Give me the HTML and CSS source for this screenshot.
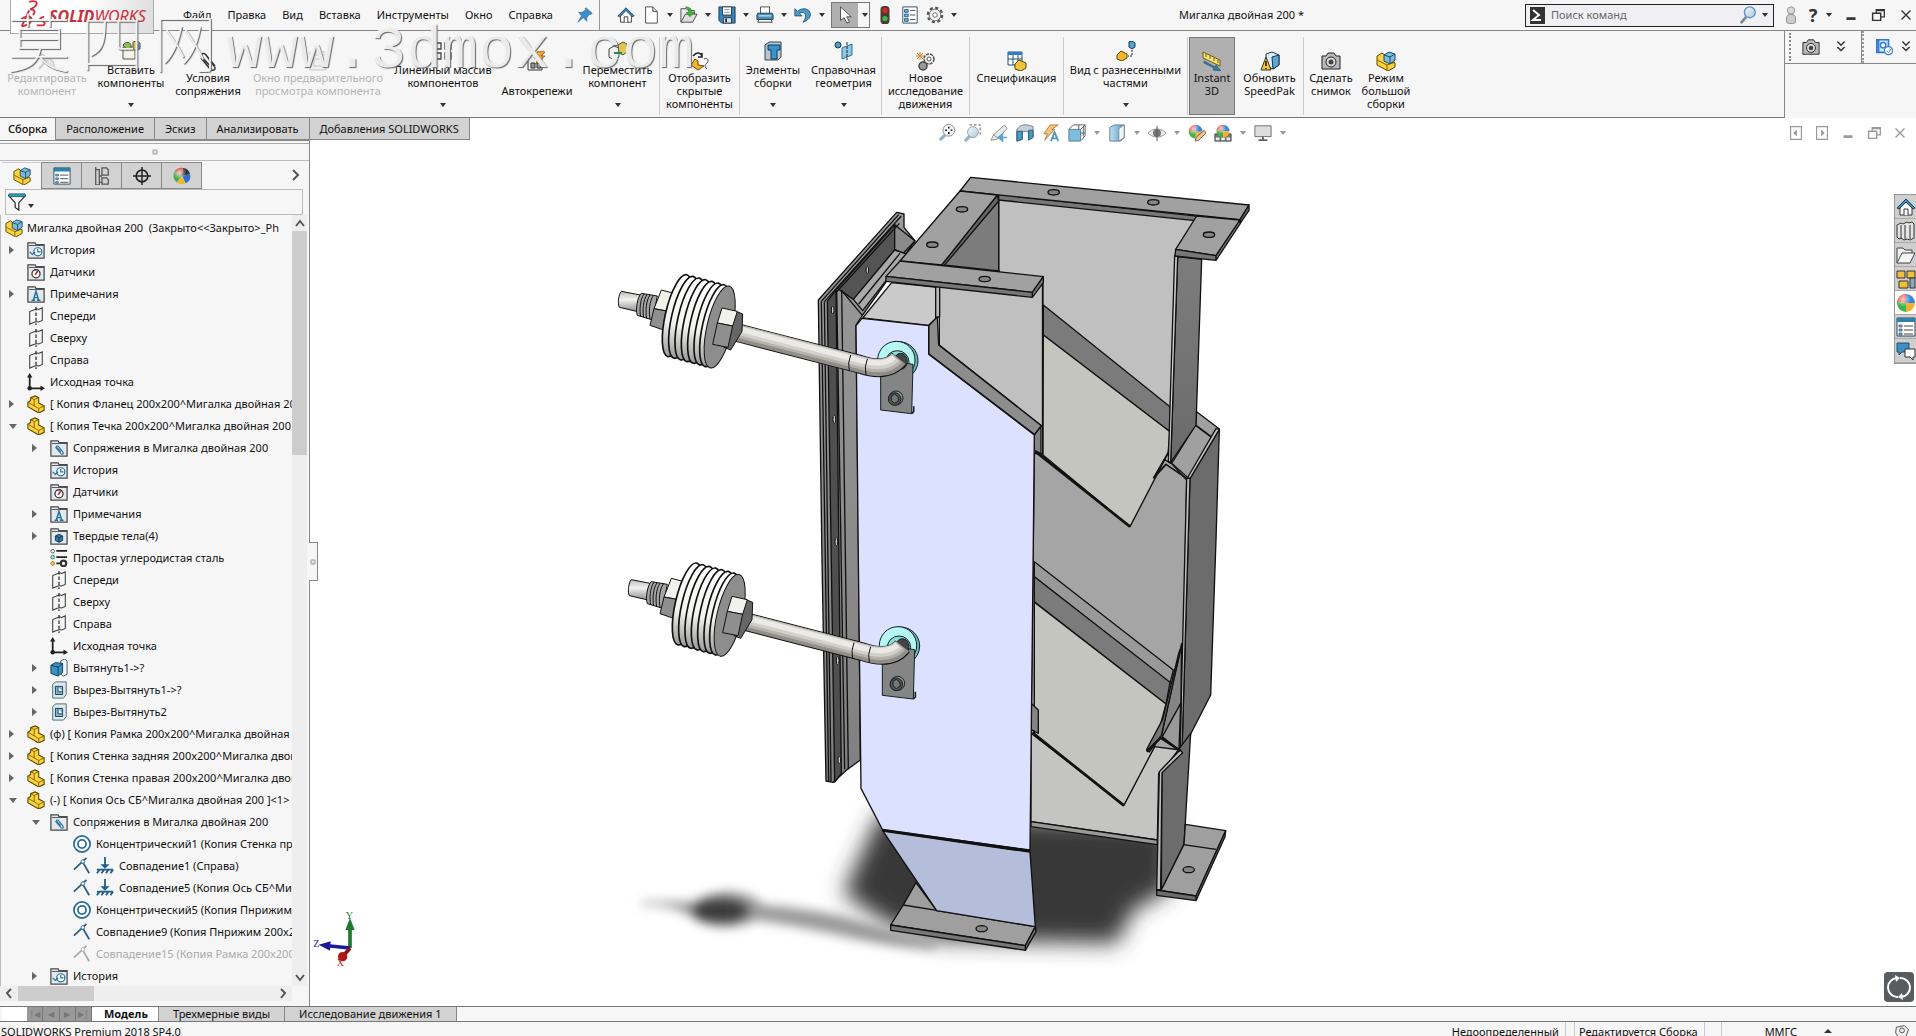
FILE: index.html
```html
<!DOCTYPE html>
<html lang="ru">
<head>
    <meta charset="UTF-8">
    <meta name="viewport" content="width=device-width, initial-scale=1.0">
    <title>Мигалка двойная 200 - SOLIDWORKS</title>
    <link rel="stylesheet" href="styles.css">
</head>
<body>
    <!-- icons -->
    <svg class="sprite" aria-hidden="true">
        <defs>
            <linearGradient id="lens" x1="0" y1="0" x2="1" y2="1"><stop offset="0" stop-color="#f4fbfe"/><stop offset="1" stop-color="#a9c9da"/></linearGradient>
            <linearGradient id="blue" x1="0" y1="0" x2="1" y2="0"><stop offset="0" stop-color="#bfe0f2"/><stop offset="1" stop-color="#4f9dc6"/></linearGradient>
            <radialGradient id="shine" cx=".35" cy=".3" r=".7"><stop offset="0" stop-color="#fff" stop-opacity=".75"/><stop offset=".6" stop-color="#fff" stop-opacity="0"/></radialGradient>
        </defs>
        <symbol id="home" viewBox="0 0 20 20"><path d="M4 10v8h12v-8l-6-6z" fill="#fff" stroke="#333"/><path d="M8 18v-6h4v6" fill="#fff" stroke="#333"/><path d="M1 11l9-9 9 9-2 1-7-7-7 7z" fill="#3f8fc0" stroke="#1d3f5c"/></symbol>
        <symbol id="doc" viewBox="0 0 20 20"><path d="M4 1h8l5 5v13H4z" fill="#fff" stroke="#444"/><path d="M12 1v5h5" fill="#ddd" stroke="#444"/></symbol>
        <symbol id="open" viewBox="0 0 20 20"><path d="M1 18V3h6l2 2h7v4" fill="#e8e8e8" stroke="#444"/><path d="M1 18L6 9h13l-5 9z" fill="#ddd" stroke="#444"/><path d="M6 1c5 0 7 2 7 6h3l-5 5-4-5h3c0-2-1-4-4-6z" fill="#3db53d" stroke="#1a6a1a" stroke-width=".6"/></symbol>
        <symbol id="save" viewBox="0 0 20 20"><path d="M1 1h18v18H4l-3-3z" fill="#3c83b5" stroke="#1f3a55"/><path d="M5 1h10v9H5z" fill="#fff" stroke="#1f3a55"/><path d="M7 4h6M7 7h6" stroke="#888"/><path d="M6 13h9v6H6z" fill="#ddd" stroke="#1f3a55"/><path d="M8 14h2v4H8z" fill="#224"/></symbol>
        <symbol id="print" viewBox="0 0 20 20"><path d="M5 1h10v8H5z" fill="#fff" stroke="#444"/><path d="M2 8h16l1 2v5H1v-5z" fill="#3f8fb8" stroke="#24404f"/><path d="M3 15h14l1 3H2z" fill="#fff" stroke="#333"/><path d="M3 11h14" stroke="#fff"/></symbol>
        <symbol id="undo" viewBox="0 0 20 20"><path d="M1 3v8h8L6 8c4-2 7 0 7 3s-2 5-3 7c6-2 9-6 8-10-1-5-9-7-14-2z" fill="#4f9aca" stroke="#1f5277"/></symbol>
        <symbol id="cursor" viewBox="0 0 20 20"><path d="M5 1v15l4-3 3 6 3-1-3-6h5z" fill="#fff" stroke="#444"/></symbol>
        <symbol id="light" viewBox="0 0 20 20"><rect x="5" y="0" width="10" height="20" rx="4" fill="#4a3a34"/><circle cx="10" cy="5" r="3" fill="#d8281c"/><circle cx="10" cy="14" r="3" fill="#38b848"/></symbol>
        <symbol id="list" viewBox="0 0 20 20"><path d="M2 1h16v18H2z" fill="#fff" stroke="#2b4356"/><path d="M4 4h4v3H4zM4 9h4v3H4zM4 14h4v3H4z" fill="#7fb6d8" stroke="#1f5277"/><path d="M10 5h6M10 10h6M10 15h6" stroke="#444"/></symbol>
        <symbol id="gear" viewBox="0 0 20 20"><circle cx="10" cy="10" r="8" fill="none" stroke="#555" stroke-width="2.5" stroke-dasharray="3.500 2.780"/><circle cx="10" cy="10" r="6.500" fill="#eee" stroke="#666"/><circle cx="10" cy="10" r="2.500" fill="#fff" stroke="#666"/></symbol>
        <symbol id="pin" viewBox="0 0 20 20"><path d="M11 2l7 6-2 2-1-1-3 4v4l-4-4-6 5 4-7-3-4h4l4-3-1-1z" fill="#3c8fcb" stroke="#2a6c9e" stroke-width=".7"/></symbol>
        <symbol id="mag" viewBox="0 0 20 20"><path d="M8 12l-6 7" stroke="#7a8a94" stroke-width="3"/><circle cx="12" cy="7" r="6" fill="url(#lens)" stroke="#5b8fc0" stroke-width="1.5"/></symbol>
        <symbol id="person" viewBox="0 0 20 20"><circle cx="10" cy="5" r="4" fill="#d8d8d8" stroke="#888"/><path d="M5 13c0-5 10-5 10 0v5c0 2-10 2-10 0z" fill="#ccc" stroke="#888"/></symbol>
        <symbol id="restore" viewBox="0 0 20 20"><path d="M8 8V4h9v8h-4" fill="none" stroke="currentColor" stroke-width="1.4"/><path d="M4 8h9v8H4zM8 5h9" fill="none" stroke="currentColor" stroke-width="1.6"/></symbol>
        <symbol id="min" viewBox="0 0 20 20"><path d="M5 14h10" stroke="currentColor" stroke-width="3"/></symbol>
        <symbol id="close" viewBox="0 0 20 20"><path d="M5 5l10 10M15 5L5 15" stroke="currentColor" stroke-width="1.5"/></symbol>
        <symbol id="camera" viewBox="0 0 20 20"><path d="M1 5h4l2-3h6l2 3h4v13H1z" fill="#b9b9b9" stroke="#222"/><circle cx="10" cy="11" r="5" fill="#ddd" stroke="#222"/><circle cx="10" cy="11" r="2.5" fill="#444"/></symbol>
        <symbol id="chev2" viewBox="0 0 20 20"><path d="M6 4l4 4 4-4M6 10l4 4 4-4" fill="none" stroke="#333" stroke-width="1.6"/></symbol>
        <symbol id="bluebox" viewBox="0 0 20 20"><path d="M2 2h13v14H2zM4 2v14" fill="#cfe4f9" stroke="#2f7ad0" stroke-width="1.8"/><circle cx="9" cy="8" r="3" fill="#fff" stroke="#2f7ad0" stroke-width="1.5"/><circle cx="15" cy="14" r="4.5" fill="#fff" stroke="#2f7ad0" stroke-width="1.3"/><path d="M13 14l2 2 3-4" fill="none" stroke="#2f7ad0"/></symbol>

        <symbol id="part" viewBox="0 0 20 20"><path d="M1 8l3-2V3l5-2 4 2v6l6 3v5l-6 3L1 13z" fill="#fcd33a" stroke="#5a4600" stroke-width="1.200"/><path d="M1 8l12 7v5M4 3l4 2 5-2M8 5v7M13 15l6-3" fill="none" stroke="#7c6200"/></symbol>
        <symbol id="asm" viewBox="0 0 20 20"><path d="M1 5l5-3 4 3v5l9 2v4l-7 4L1 14z" fill="#fcd33a" stroke="#5a4600"/><path d="M1 9l10 5v5M11 14l8-3" fill="none" stroke="#7c6200"/><path d="M8 4l5-3 6 2v6l-5 4-6-3z" fill="#7dbce0" stroke="#1d4a68"/><path d="M8 4l6 2 5-3M14 6v7" fill="none" stroke="#1d4a68"/></symbol>
        <symbol id="folder" viewBox="0 0 20 20"><path d="M1 19V2h8l1 2h9v15z" fill="#e2e8ec" stroke="#4a4a4a" stroke-width="1.400"/><path d="M2 5h17" stroke="#4a4a4a"/></symbol>
        <symbol id="hist" viewBox="0 0 20 20"><use href="#folder"/><circle cx="12" cy="12" r="4.500" fill="#fff" stroke="#1f6f9e" stroke-width="1.300"/><path d="M12 9v3h3M3 12l3 3 3-3" fill="none" stroke="#1f6f9e" stroke-width="1.300"/></symbol>
        <symbol id="sensor" viewBox="0 0 20 20"><use href="#folder"/><circle cx="10" cy="12" r="4.500" fill="#fff" stroke="#333" stroke-width="1.400"/><path d="M9 13l3-4" stroke="#c22" stroke-width="1.800"/></symbol>
        <symbol id="note" viewBox="0 0 20 20"><use href="#folder"/><path d="M5 17h4M11 17h4M7 17l3-10 3 10M8 14h4" fill="none" stroke="#216f9f" stroke-width="1.600"/></symbol>
        <symbol id="mates" viewBox="0 0 20 20"><use href="#folder"/><path d="M6 9l6 7c2 2 4 0 2-2L9 8c-1-1-3 0-1 2l4 4" fill="none" stroke="#2a77a5" stroke-width="1.300"/></symbol>
        <symbol id="solids" viewBox="0 0 20 20"><use href="#folder"/><path d="M6 10l4-2 4 2v5l-4 2-4-2z" fill="#2f7fa8" stroke="#12384d"/><path d="M6 10l4 2 4-2M10 12v5" fill="none" stroke="#12384d"/></symbol>
        <symbol id="plane" viewBox="0 0 20 20"><path d="M8 3L3 5v14l5-2M12 3l5-2v14l-5 2M8 3l4-1M8 17l4-1" fill="none" stroke="#444" stroke-width="1.200"/><path d="M10 0v20" stroke="#222" stroke-width="1.300" stroke-dasharray="4 2"/></symbol>
        <symbol id="origin" viewBox="0 0 20 20"><path d="M3 3v14h14" fill="none" stroke="#222" stroke-width="2"/><path d="M3 0L0 5h6zM20 17l-5-3v6z" fill="#222"/><circle cx="3" cy="17" r="2.500" fill="#222"/></symbol>
        <symbol id="mat" viewBox="0 0 20 20"><path d="M7 2h12M7 9h12M7 16h4" stroke="#222" stroke-width="2"/><circle cx="3" cy="2.500" r="2" fill="#fff" stroke="#555"/><circle cx="3" cy="9" r="2" fill="#9fc" stroke="#275"/><circle cx="3" cy="16" r="2" fill="#fc5" stroke="#a70"/><circle cx="15" cy="16" r="3" fill="#fff" stroke="#333" stroke-width="2.400"/></symbol>
        <symbol id="boss" viewBox="0 0 20 20"><path d="M12 2l4-2 3 2v15l-4 2-3-2z" fill="#eef5f9" stroke="#355"/><path d="M1 7l5-3 8 1v10l-5 4-8-3z" fill="#3a93bf" stroke="#12384d"/><path d="M1 7l8 2 5-4M9 9v9" fill="none" stroke="#12384d"/></symbol>
        <symbol id="cut" viewBox="0 0 20 20"><path d="M3 4l3-3h12v14l-3 4H3z" fill="#dfe8ee" stroke="#466"/><path d="M6 6h8v9H6z" fill="#7db8d6" stroke="#12384d"/><path d="M9 6v6h5" fill="#fff" stroke="#12384d"/></symbol>
        <symbol id="conc" viewBox="0 0 20 20"><circle cx="10" cy="10" r="9" fill="#fff" stroke="#2a6f9c" stroke-width="2"/><circle cx="10" cy="10" r="4.500" fill="#fff" stroke="#2a6f9c" stroke-width="2"/></symbol>
        <symbol id="coin" viewBox="0 0 20 20"><path d="M1 14L15 1M11 6l7 12" fill="none" stroke="currentColor" stroke-width="2"/><circle cx="11" cy="5" r="2" fill="#fff" stroke="currentColor"/></symbol>
        <symbol id="ground" viewBox="0 0 20 20"><path d="M10 0v9M1 14h18M4 14l-3 4M9 14l-3 4M14 14l-3 4M19 14l-3 4" stroke="#1f5f88" stroke-width="2"/><path d="M5 8h10l-5 5z" fill="#1f5f88"/></symbol>
        <symbol id="tree-tab" viewBox="0 0 20 20"><path d="M3 0v20h4V3H3M7 10h3M7 17h3M10 1h5l2 2v6h-7zM10 12h5l2 2v5h-7z" fill="none" stroke="#555" stroke-width="1.400"/></symbol>
        <symbol id="prop" viewBox="0 0 20 20"><path d="M1 1h18v18H1z" fill="#fff" stroke="#2b4356"/><path d="M1 1h18v4H1z" fill="#2f7fad"/><path d="M3 8h3v2H3zM3 12h3v2H3zM3 16h3v2H3z" fill="#7fb6d8" stroke="#1f5277" stroke-width=".7"/><path d="M8 9h9M8 13h9M8 17h9" stroke="#444"/></symbol>
        <symbol id="target" viewBox="0 0 20 20"><circle cx="10" cy="10" r="6.500" fill="none" stroke="#222" stroke-width="1.800"/><path d="M10 0v20M0 10h20" stroke="#222" stroke-width="1.600"/></symbol>
        <symbol id="ball" viewBox="0 0 20 20"><path d="M10 10L2 5A9 9 0 0 1 11 1z" fill="#d8392c"/><path d="M10 10L11 1a9 9 0 0 1 8 7z" fill="#30363c"/><path d="M10 10l9-2a9 9 0 0 1-5 10z" fill="#2e6fd0"/><path d="M10 10l4 8a9 9 0 0 1-10-1z" fill="#f0b92c"/><path d="M10 10l-6 7A9 9 0 0 1 2 5z" fill="#46a84a"/><circle cx="10" cy="10" r="9" fill="url(#shine)"/></symbol>
        <symbol id="ball2" viewBox="0 0 20 20"><path d="M10 10L1 9A9 9 0 0 1 10 1z" fill="#f04432"/><path d="M10 10V1a9 9 0 0 1 9 9z" fill="#3486e0"/><path d="M10 10h9a9 9 0 0 1-9 9z" fill="#f2b02c"/><path d="M10 10v9A9 9 0 0 1 1 9z" fill="#3fb34e"/><circle cx="10" cy="10" r="9" fill="url(#shine)"/></symbol>
        <symbol id="filter" viewBox="0 0 20 20"><path d="M1 3h18l-7 8v8l-4-3v-5z" fill="#fff" stroke="#333" stroke-width="1.400"/><path d="M1 1h18v3H1z" fill="#2f9fc4" stroke="#1f5f7a"/></symbol>

        <symbol id="edit" viewBox="0 0 20 20"><path d="M3 2l13 8 2 8-7-3z" fill="#ddd" stroke="#aaa"/><path d="M2 18l8-9" stroke="#bbb" stroke-width="2"/></symbol>
        <symbol id="insert" viewBox="0 0 20 20"><path d="M2 6h12v12H2z" fill="#f3f3e8" stroke="#555"/><path d="M2 4c3-4 7-3 8 0v4l-4 1z" fill="#8fc047" stroke="#456"/><path d="M12 1l4-1 3 2v6l-4 2-3-2z" fill="#e0b93a" stroke="#554"/><path d="M15 3h4v6h-4z" fill="#4e86b0"/></symbol>
        <symbol id="clip" viewBox="0 0 20 20"><path d="M3 7l9 11c3 3 7 0 4-3L8 4C6 1 2 3 4 6l9 10M8 4l9 11" fill="none" stroke="#333" stroke-width="1.500"/></symbol>
        <symbol id="window" viewBox="0 0 20 20"><path d="M2 1h16v18H2z" fill="#eee" stroke="#b5b5b5"/><path d="M2 4h16M6 8h8v7H6z" fill="none" stroke="#b5b5b5"/></symbol>
        <symbol id="pattern" viewBox="0 0 20 20"><path d="M2 2h6v6H2zM12 2h6v6h-6zM2 12h6v6H2zM12 12h6v6h-6z" fill="#eee" stroke="#444" stroke-width="1.300"/></symbol>
        <symbol id="smart" viewBox="0 0 20 20"><path d="M1 4h14v15H1z" fill="#eee" stroke="#333"/><path d="M4 12h4v5H4zM10 12h4v5h-4z" fill="#999" stroke="#333"/><path d="M11 0l7 1-4 4h4l-9 8 2-6H7z" fill="#f6a52c" stroke="#8a4d00" stroke-width=".7"/></symbol>
        <symbol id="move" viewBox="0 0 20 20"><path d="M1 8l5-3 5 2v9l-5 3-5-3z" fill="#eee" stroke="#444"/><path d="M10 4l5-3 4 2v8l-4 3-4-2z" fill="#e6c64a" stroke="#554"/><path d="M6 12h8" stroke="#286" stroke-width="2"/></symbol>
        <symbol id="show" viewBox="0 0 20 20"><path d="M1 14l4-6 3 2v4l6 1-6 4z" fill="#f1b52c" stroke="#6a4600"/><path d="M3 5c4-5 8-3 9 0M12 2v4H8" fill="none" stroke="#222" stroke-width="1.500"/><path d="M14 8c4-2 5 2 3 4s-3 3 0 6" fill="none" stroke="#444"/></symbol>
        <symbol id="features" viewBox="0 0 20 20"><path d="M2 4l4-3h12v15l-3 3H2z" fill="#b9c7d0" stroke="#345"/><path d="M5 4h12v5h-3v9H8V9H5z" fill="#3a93cf" stroke="#12384d"/></symbol>
        <symbol id="refgeo" viewBox="0 0 20 20"><circle cx="4" cy="4" r="3" fill="#4e9fc8" stroke="#12384d"/><path d="M8 7l10-4v11L8 18z" fill="#8cc8e8" stroke="#2a6f9c"/><path d="M13 1v18" stroke="#222" stroke-dasharray="3 1"/></symbol>
        <symbol id="motion" viewBox="0 0 20 20"><circle cx="13" cy="8" r="5" fill="#eee" stroke="#555" stroke-width="1.500" stroke-dasharray="3 1"/><circle cx="13" cy="8" r="2" fill="#fff" stroke="#555"/><circle cx="7" cy="15" r="4" fill="#999" stroke="#444" stroke-width="1.500"/><path d="M4 1v8M0 5h8M1 2l6 6M7 2L1 8" stroke="#d8832a"/></symbol>
        <symbol id="bom" viewBox="0 0 20 20"><path d="M1 1h14v13H1z" fill="#fff" stroke="#1f5277"/><path d="M1 1h14v3H1z" fill="#2f7fbd"/><path d="M1 8h14M6 4v10M11 4v10" stroke="#1f5277"/><path d="M8 13l4-4 7 3v5l-5 3-6-2z" fill="#f3c43a" stroke="#5a4600"/></symbol>
        <symbol id="explode" viewBox="0 0 20 20"><path d="M1 14l4-4 6 3v4l-5 3-5-2z" fill="#f3b52c" stroke="#5a4600"/><path d="M13 1l3-1 3 2v4l-3 2-3-2z" fill="#4ea3d4" stroke="#12384d"/><path d="M16 9v6h-4" fill="none" stroke="#222" stroke-dasharray="2 1"/></symbol>
        <symbol id="instant" viewBox="0 0 20 20"><path d="M1 1l17 8v6L1 7z" fill="#f7e27a" stroke="#6b5a10"/><path d="M4 3v3M8 5v3M12 7v3M16 9v3" stroke="#6b5a10"/><path d="M2 10l11 6 1-2 5 6-8-1 1-2L2 12z" fill="#2f7fad" stroke="#1d4a68" stroke-width=".6"/></symbol>
        <symbol id="speedpak" viewBox="0 0 20 20"><path d="M6 3l6-2 7 3v10l-6 4-7-3z" fill="#d8eaf4" stroke="#234"/><path d="M12 6l7-2v10l-6 4z" fill="#5aa7d2" stroke="#234"/><path d="M1 19L6 6l5 13z" fill="#f9c62c" stroke="#333"/><path d="M6 10v5M6 17v1" stroke="#111" stroke-width="1.500"/></symbol>
        <symbol id="viewfit" viewBox="0 0 20 20"><path d="M8 12l-6 6" stroke="#8fb4c6" stroke-width="3.500"/><circle cx="12" cy="7" r="6.500" fill="#f3f6f8" stroke="#888"/><path d="M12 3v2M12 9v2M8 7h2M14 7h2" stroke="#222" stroke-width="1.800"/></symbol>
        <symbol id="viewzoom" viewBox="0 0 20 20"><path d="M6 1h12v13" fill="none" stroke="#555" stroke-dasharray="3 2"/><path d="M7 13l-6 6" stroke="#8fb4c6" stroke-width="3.500"/><circle cx="10" cy="9" r="6" fill="url(#lens)" stroke="#999"/></symbol>
        <symbol id="prev" viewBox="0 0 20 20"><path d="M16 1L4 12l-3 6 7-1L19 5z" fill="#e9e9e9" stroke="#888"/><path d="M4 12l5 4" stroke="#888"/><path d="M19 15h-6M14 11l-5 4 5 4z" fill="#5ea3c8" stroke="#5ea3c8" stroke-width="1.500"/></symbol>
        <symbol id="section" viewBox="0 0 20 20"><path d="M1 6l4-4c5-2 10-1 14 1v11l-5 3V9c-3-1-5-1-7 0v8l-6 2z" fill="#c3d0d7" stroke="#678"/><path d="M1 8h6v9l-6 2zM14 7h5v8l-5 3z" fill="#3f9ccb" stroke="#356"/></symbol>
        <symbol id="annot" viewBox="0 0 20 20"><path d="M9 1h9l-7 5h3L3 18l3-7H2z" fill="#f6c27c" stroke="#b07a3c"/><path d="M10 19l4-10 4 10M11 16h6" fill="none" stroke="#4d97c0" stroke-width="2"/></symbol>
        <symbol id="orient" viewBox="0 0 20 20"><path d="M6 1h13v12l-4 5" fill="none" stroke="#555"/><path d="M1 6h13v13H1z" fill="#7fbde0" stroke="#4a7d98"/><path d="M1 6l5-5M14 6l5-5M12 1v5M17 3v11M14 10h5" stroke="#555"/></symbol>
        <symbol id="style" viewBox="0 0 20 20"><path d="M2 4l5-3h11v14l-4 4H2z" fill="url(#blue)" stroke="#678"/><path d="M12 5l6-4v14l-6 4z" fill="#f4f4f4" stroke="#789"/></symbol>
        <symbol id="eye" viewBox="0 0 20 20"><path d="M0 10c5-6 15-6 20 0-5 6-15 6-20 0z" fill="#eee" stroke="#999"/><circle cx="10" cy="10" r="4.500" fill="#777"/><path d="M10 2v17" stroke="#555"/></symbol>
        <symbol id="appear" viewBox="0 0 20 20"><use href="#ball2" width="17" height="17"/><path d="M18 7l-9 8-1 4 4-1 8-8z" fill="#efc49a" stroke="#8a5a30"/></symbol>
        <symbol id="scene" viewBox="0 0 20 20"><path d="M1 11h18v8H1z" fill="#777" stroke="#444"/><path d="M2 15h4v3H2zM8 15h4v3H8zM14 15h4v3h-4z" fill="#eee"/><use href="#ball2" x="2" width="16" height="16"/></symbol>
        <symbol id="monitor" viewBox="0 0 20 20"><path d="M1 2h18v12H1z" fill="#ddd" stroke="#666"/><path d="M10 14v4M5 18h10" stroke="#666" stroke-width="2"/></symbol>
        <symbol id="pane-l" viewBox="0 0 20 20"><path d="M4 3h12v14H4z" fill="none" stroke="currentColor" stroke-width="1.300"/><path d="M11 6v8l-4-4z" fill="currentColor"/></symbol>
        <symbol id="pane-r" viewBox="0 0 20 20"><path d="M4 3h12v14H4z" fill="none" stroke="currentColor" stroke-width="1.300"/><path d="M9 6v8l4-4z" fill="currentColor"/></symbol>
        <symbol id="books" viewBox="0 0 20 20"><path d="M1 4l4-2 2 1 4-2 2 1 3-1 2 2v14l-4 2-3-1-3 1-3-2-2 1-2-2z" fill="#e5e5e5" stroke="#333"/><path d="M5 4v14M9 4v14M14 4v14" stroke="#333"/></symbol>
        <symbol id="folder2" viewBox="0 0 20 20"><path d="M1 18V3h6l2 2h7v4" fill="#eee" stroke="#444"/><path d="M1 18L6 8h13l-5 10z" fill="#f6f6f6" stroke="#444"/></symbol>
        <symbol id="palette" viewBox="0 0 20 20"><path d="M1 2h8v7H1zM11 2h8v7h-8zM3 12h9v7H3z" fill="#f0c03c" stroke="#333"/><path d="M14 9h5v10h-5z" fill="#8ab" stroke="#333"/></symbol>
        <symbol id="chat" viewBox="0 0 20 20"><path d="M1 2h12v9H6l-3 3v-3H1z" fill="#3d8fc4" stroke="#24506e"/><path d="M9 8h10v8h-2v3l-3-3H9z" fill="#fff" stroke="#333"/></symbol>
    </svg>

    <header class="titlebar">
        <div class="logo">
            <svg viewBox="0 0 34 34"><path d="M14 2c6-2 10 0 7 4-1 2-4 3-6 4 5 0 6 3 3 6M6 28l8-17M6 28c8-1 12-6 10-9s-8-1-11 2M22 27l7 0c3-2 1-4-2-5s-1-4 3-4" fill="none" stroke="#c8323c" stroke-width="2"/></svg>
            <span><b>SOLID</b>WORKS</span>
        </div>
        <nav class="menu">
            <a href="#">Файл</a>
            <a href="#">Правка</a>
            <a href="#">Вид</a>
            <a href="#">Вставка</a>
            <a href="#">Инструменты</a>
            <a href="#">Окно</a>
            <a href="#">Справка</a>
            <button class="ico pin" aria-label="Закрепить"><svg><use href="#pin"/></svg></button>
        </nav>
        <div class="quick">
            <button class="ico" aria-label="Домой"><svg><use href="#home"/></svg></button>
            <button class="ico" aria-label="Создать"><svg><use href="#doc"/></svg></button><i class="caret"></i>
            <button class="ico" aria-label="Открыть"><svg><use href="#open"/></svg></button><i class="caret"></i>
            <button class="ico" aria-label="Сохранить"><svg><use href="#save"/></svg></button><i class="caret"></i>
            <button class="ico" aria-label="Печать"><svg><use href="#print"/></svg></button><i class="caret"></i>
            <button class="ico" aria-label="Отменить"><svg><use href="#undo"/></svg></button><i class="caret"></i>
            <div class="select-btn">
                <button class="ico" aria-label="Выбрать"><svg><use href="#cursor"/></svg></button><i class="caret"></i>
            </div>
            <button class="ico" aria-label="Перестроить"><svg><use href="#light"/></svg></button>
            <button class="ico" aria-label="Свойства файла"><svg><use href="#list"/></svg></button>
            <button class="ico" aria-label="Параметры"><svg><use href="#gear"/></svg></button><i class="caret"></i>
        </div>
        <div class="doc-title">Мигалка двойная 200 *</div>
        <form class="search">
            <span class="prompt"><svg viewBox="0 0 14 16"><path d="M3 3l6 5-6 5h8" fill="none" stroke="#fff" stroke-width="2"/></svg></span>
            <input type="text" placeholder="Поиск команд" aria-label="Поиск команд">
            <svg><use href="#mag"/></svg><i class="caret"></i>
        </form>
        <div class="win">
            <button class="ico" aria-label="Вход"><svg><use href="#person"/></svg></button>
            <button class="help">?</button><i class="caret"></i>
            <button class="ico" aria-label="Свернуть"><svg><use href="#min"/></svg></button>
            <button class="ico" aria-label="Развернуть"><svg><use href="#restore"/></svg></button>
            <button class="ico" aria-label="Закрыть"><svg><use href="#close"/></svg></button>
        </div>
    </header>

    <div class="ribbon-row">
        <div class="ribbon">
            <button class="cmd off"><svg><use href="#edit"/></svg><span>Редактировать<br>компонент</span></button>
            <button class="cmd drop"><svg><use href="#insert"/></svg><span>Вставить<br>компоненты</span><i class="caret"></i></button>
            <button class="cmd"><svg><use href="#clip"/></svg><span>Условия<br>сопряжения</span></button>
            <button class="cmd off"><svg><use href="#window"/></svg><span>Окно предварительного<br>просмотра компонента</span></button>
            <button class="cmd drop"><svg><use href="#pattern"/></svg><span>Линейный массив<br>компонентов</span><i class="caret"></i></button>
            <button class="cmd low"><svg><use href="#smart"/></svg><span>Автокрепежи</span></button>
            <button class="cmd drop sep"><svg><use href="#move"/></svg><span>Переместить<br>компонент</span><i class="caret"></i></button>
            <button class="cmd sep"><svg><use href="#show"/></svg><span>Отобразить<br>скрытые<br>компоненты</span></button>
            <button class="cmd drop"><svg><use href="#features"/></svg><span>Элементы<br>сборки</span><i class="caret"></i></button>
            <button class="cmd drop sep"><svg><use href="#refgeo"/></svg><span>Справочная<br>геометрия</span><i class="caret"></i></button>
            <button class="cmd sep"><svg><use href="#motion"/></svg><span>Новое<br>исследование<br>движения</span></button>
            <button class="cmd sep"><svg><use href="#bom"/></svg><span>Спецификация</span></button>
            <button class="cmd drop sep"><svg><use href="#explode"/></svg><span>Вид с разнесенными<br>частями</span><i class="caret"></i></button>
            <button class="cmd on"><svg><use href="#instant"/></svg><span>Instant<br>3D</span></button>
            <button class="cmd sep"><svg><use href="#speedpak"/></svg><span>Обновить<br>SpeedPak</span></button>
            <button class="cmd"><svg><use href="#camera"/></svg><span>Сделать<br>снимок</span></button>
            <button class="cmd"><svg><use href="#asm"/></svg><span>Режим<br>большой<br>сборки</span></button>
        </div>
        <div class="extra">
            <div class="grip"></div>
            <button class="ico" aria-label="Снимок"><svg><use href="#camera"/></svg></button>
            <button class="ico" aria-label="Ещё"><svg><use href="#chev2"/></svg></button>
            <div class="grip second"></div>
            <button class="ico" aria-label="Проверка"><svg><use href="#bluebox"/></svg></button>
            <button class="ico" aria-label="Ещё"><svg><use href="#chev2"/></svg></button>
        </div>
    </div>

    <div class="tabs">
        <button class="tab active">Сборка</button>
        <button class="tab">Расположение</button>
        <button class="tab">Эскиз</button>
        <button class="tab">Анализировать</button>
        <button class="tab">Добавления SOLIDWORKS</button>
    </div>

    <main class="work">
        <aside class="side">
            <div class="splitter"><i></i></div>
            <div class="side-tabs">
                <button class="active" aria-label="Дерево"><svg><use href="#asm"/></svg></button>
                <button aria-label="Свойства"><svg><use href="#prop"/></svg></button>
                <button aria-label="Конфигурации"><svg><use href="#tree-tab"/></svg></button>
                <button aria-label="Размеры"><svg><use href="#target"/></svg></button>
                <button aria-label="Вид"><svg><use href="#ball"/></svg></button>
                <svg class="more" viewBox="0 0 10 12"><path d="M2 1l5 5-5 5" fill="none" stroke="#555" stroke-width="2"/></svg>
            </div>
            <div class="filter"><svg><use href="#filter"/></svg><i class="caret"></i></div>
            <div class="tree-wrap">
                <ul class="tree">
                    <li class="root"><svg><use href="#asm"/></svg>Мигалка двойная 200&nbsp; (Закрыто&lt;&lt;Закрыто&gt;_Ph</li>
                    <li class="closed"><svg><use href="#hist"/></svg>История</li>
                    <li><svg><use href="#sensor"/></svg>Датчики</li>
                    <li class="closed"><svg><use href="#note"/></svg>Примечания</li>
                    <li><svg><use href="#plane"/></svg>Спереди</li>
                    <li><svg><use href="#plane"/></svg>Сверху</li>
                    <li><svg><use href="#plane"/></svg>Справа</li>
                    <li><svg><use href="#origin"/></svg>Исходная точка</li>
                    <li class="closed"><svg><use href="#part"/></svg>[ Копия Фланец 200x200^Мигалка двойная 200</li>
                    <li class="opened"><svg><use href="#part"/></svg>[ Копия Течка 200x200^Мигалка двойная 200</li>
                    <li class="l1 closed"><svg><use href="#mates"/></svg>Сопряжения в Мигалка двойная 200</li>
                    <li class="l1"><svg><use href="#hist"/></svg>История</li>
                    <li class="l1"><svg><use href="#sensor"/></svg>Датчики</li>
                    <li class="l1 closed"><svg><use href="#note"/></svg>Примечания</li>
                    <li class="l1 closed"><svg><use href="#solids"/></svg>Твердые тела(4)</li>
                    <li class="l1"><svg><use href="#mat"/></svg>Простая углеродистая сталь</li>
                    <li class="l1"><svg><use href="#plane"/></svg>Спереди</li>
                    <li class="l1"><svg><use href="#plane"/></svg>Сверху</li>
                    <li class="l1"><svg><use href="#plane"/></svg>Справа</li>
                    <li class="l1"><svg><use href="#origin"/></svg>Исходная точка</li>
                    <li class="l1 closed"><svg><use href="#boss"/></svg>Вытянуть1-&gt;?</li>
                    <li class="l1 closed"><svg><use href="#cut"/></svg>Вырез-Вытянуть1-&gt;?</li>
                    <li class="l1 closed"><svg><use href="#cut"/></svg>Вырез-Вытянуть2</li>
                    <li class="closed"><svg><use href="#part"/></svg>(ф) [ Копия Рамка 200x200^Мигалка двойная</li>
                    <li class="closed"><svg><use href="#part"/></svg>[ Копия Стенка задняя 200x200^Мигалка двойная</li>
                    <li class="closed"><svg><use href="#part"/></svg>[ Копия Стенка правая 200x200^Мигалка двойная</li>
                    <li class="opened"><svg><use href="#part"/></svg>(-) [ Копия Ось СБ^Мигалка двойная 200 ]&lt;1&gt;</li>
                    <li class="l1 opened"><svg><use href="#mates"/></svg>Сопряжения в Мигалка двойная 200</li>
                    <li class="l2"><svg><use href="#conc"/></svg>Концентрический1 (Копия Стенка пр</li>
                    <li class="l2"><svg><use href="#coin"/></svg><svg><use href="#ground"/></svg>Совпадение1 (Справа)</li>
                    <li class="l2"><svg><use href="#coin"/></svg><svg><use href="#ground"/></svg>Совпадение5 (Копия Ось СБ^Ми</li>
                    <li class="l2"><svg><use href="#conc"/></svg>Концентрический5 (Копия Пнрижим</li>
                    <li class="l2"><svg><use href="#coin"/></svg>Совпадение9 (Копия Пнрижим 200x200</li>
                    <li class="l2 dim"><svg><use href="#coin"/></svg>Совпадение15 (Копия Рамка 200x200</li>
                    <li class="l1 closed"><svg><use href="#hist"/></svg>История</li>
                </ul>
                <div class="vbar">
                    <svg viewBox="0 0 12 16"><path d="M2 11l4-5 4 5" fill="none" stroke="#555" stroke-width="2"/></svg>
                    <div class="thumb"></div>
                    <svg viewBox="0 0 12 16"><path d="M2 5l4 5 4-5" fill="none" stroke="#555" stroke-width="2"/></svg>
                </div>
            </div>
            <div class="hbar">
                <svg viewBox="0 0 18 15"><path d="M11 3L7 7l4 5" fill="none" stroke="#555" stroke-width="2"/></svg>
                <div class="thumb"></div>
                <svg viewBox="0 0 18 15"><path d="M7 3l4 4-4 5" fill="none" stroke="#555" stroke-width="2"/></svg>
            </div>
            <div class="side-handle"><i></i></div>
        </aside>

        <section class="view">
            <div class="hud">
                <button class="ico" aria-label="Во весь экран"><svg><use href="#viewfit"/></svg></button>
                <button class="ico" aria-label="Увеличить элемент"><svg><use href="#viewzoom"/></svg></button>
                <button class="ico" aria-label="Предыдущий вид"><svg><use href="#prev"/></svg></button>
                <button class="ico" aria-label="Разрез"><svg><use href="#section"/></svg></button>
                <button class="ico" aria-label="Примечания"><svg><use href="#annot"/></svg></button>
                <button class="ico" aria-label="Ориентация"><svg><use href="#orient"/></svg></button><i class="caret"></i>
                <button class="ico" aria-label="Стиль отображения"><svg><use href="#style"/></svg></button><i class="caret"></i>
                <button class="ico" aria-label="Скрыть"><svg><use href="#eye"/></svg></button><i class="caret"></i>
                <button class="ico" aria-label="Внешний вид"><svg><use href="#appear"/></svg></button>
                <button class="ico" aria-label="Сцена"><svg><use href="#scene"/></svg></button><i class="caret"></i>
                <button class="ico" aria-label="Настройки вида"><svg><use href="#monitor"/></svg></button><i class="caret"></i>
            </div>
            <div class="doc-win">
                <button class="ico" aria-label="Левая панель"><svg><use href="#pane-l"/></svg></button>
                <button class="ico" aria-label="Правая панель"><svg><use href="#pane-r"/></svg></button>
                <button class="ico" aria-label="Свернуть документ"><svg><use href="#min"/></svg></button>
                <button class="ico" aria-label="Восстановить документ"><svg><use href="#restore"/></svg></button>
                <button class="ico" aria-label="Закрыть документ"><svg><use href="#close"/></svg></button>
            </div>

            <!-- 3 units = 1px at full size -->
            <svg class="model" viewBox="-1470 -60 4818 2598">
                <defs>
                    <filter id="soft" x="-30%" y="-30%" width="160%" height="160%"><feGaussianBlur stdDeviation="34"/></filter>
                    <filter id="soft2" x="-30%" y="-80%" width="160%" height="260%"><feGaussianBlur stdDeviation="16"/></filter>
                    <linearGradient id="side" x1="0" y1="0" x2="0" y2="1"><stop offset="0" stop-color="#9a9a9a"/><stop offset="1" stop-color="#808080"/></linearGradient>
                    <linearGradient id="disc" x1="0" y1="0" x2="0" y2="1"><stop offset="0" stop-color="#fff"/><stop offset=".6" stop-color="#f2f2f0"/><stop offset="1" stop-color="#999"/></linearGradient>
                    <linearGradient id="stub" x1="0" y1="0" x2="0" y2="1"><stop offset="0" stop-color="#bbb"/><stop offset=".4" stop-color="#f2f2f0"/><stop offset="1" stop-color="#8a8a8a"/></linearGradient>
                    <linearGradient id="dark" x1="0" y1="0" x2="0" y2="1"><stop offset="0" stop-color="#7d7d7d"/><stop offset="1" stop-color="#6a6a6a"/></linearGradient>

                    <g id="weights" transform="translate(-600 0)" stroke="#111" stroke-width="3">
                        <path d="M64 394l62 12-8 50-60-14c-6-10-2-40 6-48z" fill="url(#stub)"/>
                        <path d="M124 400l48 8-14 72-46-14c-6-16 0-56 12-66z" fill="#a5a5a5"/>
                        <path d="M132 402c-12 16-14 50-10 68M141 404c-12 16-14 50-10 68M150 405c-12 16-14 50-10 70M160 407c-12 16-14 50-10 70" fill="none"/>
                        <path d="M184 390l46 12-14 54-54-10z" fill="#f2f2ec"/>
                        <path d="M162 446l54 10-8 60-58-20z" fill="#8f8f8f"/>
                        <g fill="url(#disc)" stroke-width="5">
                            <ellipse cx="232" cy="467" rx="36" ry="126" transform="rotate(13 232 467)"/>
                            <ellipse cx="251" cy="472" rx="36" ry="126" transform="rotate(13 251 472)"/>
                            <ellipse cx="270" cy="477" rx="36" ry="126" transform="rotate(13 270 477)"/>
                            <ellipse cx="289" cy="482" rx="36" ry="126" transform="rotate(13 289 482)"/>
                            <ellipse cx="308" cy="487" rx="36" ry="126" transform="rotate(13 308 487)"/>
                            <ellipse cx="327" cy="492" rx="36" ry="126" transform="rotate(13 327 492)"/>
                            <ellipse cx="344" cy="497" rx="36" ry="126" transform="rotate(13 344 497)"/>
                        </g>
                        <ellipse cx="359" cy="501" rx="38" ry="126" transform="rotate(13 359 501)" fill="#8d8d8d"/>
                        <path d="M404 452l24 10-2 52-34 56-20-8z" fill="#666"/>
                        <path d="M366 444l46 10-14 44-46-9z" fill="#f2f2ec"/>
                        <path d="M352 489l46 9-14 64-46-9z" fill="#8f8f8f"/>
                    </g>
                    <g id="rod" fill="none">
                        <path d="M-192 517L180 613Q262 640 298 596" stroke="#111" stroke-width="56"/>
                        <path d="M-192 517L180 613Q262 640 298 596" stroke="#908e88" stroke-width="50"/>
                        <path d="M-190 512L182 608Q258 631 291 594" stroke="#b4b2ab" stroke-width="40"/>
                        <path d="M-189 509L182 605Q256 626 286 593" stroke="#d2d0ca" stroke-width="29"/>
                        <path d="M-188 506L182 602Q252 620 282 592" stroke="#ebeae6" stroke-width="16"/>
                        <path d="M152 585q-10 24-4 48M202 597q-10 24-4 48" stroke="#111" stroke-width="3"/>
                    </g>
                    <g id="mount" stroke="#122" stroke-width="3">
                        <ellipse cx="296" cy="602" rx="58" ry="57" fill="#6fb5b5"/>
                        <ellipse cx="289" cy="600" rx="56" ry="56" fill="#b6f7f4"/>
                        <ellipse cx="292" cy="606" rx="35" ry="34" fill="#8fdcdc"/>
                        <path d="M242 650v100l93 11 4-148-26-4z" fill="#858585"/>
                        <path d="M335 761l6-6v-16" fill="none" stroke-width="5"/>
                        <circle cx="288" cy="714" r="21" fill="#999"/>
                        <circle cx="284" cy="717" r="19" fill="#555"/>
                        <path d="M274 708l10-6 10 8 2 12-12 8-10-8z" fill="#777"/>
                        <ellipse cx="302" cy="604" rx="20" ry="24" fill="#444"/>
                    </g>
                </defs>

                <!-- floor shadow -->
                <g filter="url(#soft)" fill="#383838">
                    <path d="M240 1960L130 2200 260 2290 420 2340 950 2350 1000 2250 1110 2190 1120 1990z"/>
                </g>
                <g filter="url(#soft2)">
                    <path d="M-470 2225l150 0q60-34 120-30 60 6 90 40 160 10 300 50t220 60v20q-120 0-270-34t-270-50q-90 40-180 0-60-50-170-46z" fill="#999"/>
                    <ellipse cx="-238" cy="2252" rx="88" ry="40" fill="#3c3c3c"/>
                </g>

                <g stroke="#111" stroke-width="4" stroke-linejoin="round">
                    <!-- inner walls -->
                    <path d="M703 880L1105 900l55 60-15 810-75 270-380-55z" fill="#a5a5a5"/>
                    <path d="M693 1720l279 215 90-175 80 10-66 70-4 200-379-55z" fill="#c4c4c2"/>
                    <path d="M693 1985l379 55v14l-379-54z" fill="#999"/>
                    <path d="M703 1205l417 325-10 40-407-320z" fill="#999"/>
                    <path d="M703 1250l407 317-12 65-395-307z" fill="#7b7b7b"/>
                    <path d="M703 1327l395 305-35 130-91 173-269-213z" fill="#c4c5bf"/>
                    <path d="M697 1718l275 219" stroke-width="8"/>
                    <path d="M693 1630l22 20v70l-22-12z" fill="#858585"/>
                    <path d="M596 115l594 65-30 60-35 50-13 620-384-250-132-330z" fill="#c0c0c0"/>
                    <path d="M418 370h310v430L418 555z" fill="#c0c0c0"/>
                    <path d="M596 122v211l-166-18z" fill="#7c7c7c"/>
                    <path d="M730 435l380 305v75L730 525z" fill="#7b7b7b"/>
                    <path d="M730 525l380 290-6 65-114 220-262-216z" fill="#c4c5bf"/>
                    <path d="M706 874l284 226" stroke-width="8"/>
                    <path d="M728 370v515" stroke-width="5"/>

                    <!-- right column -->
                    <path d="M1190 755l68 52-90 150-53-47 72-115z" fill="#a0a0a0"/>
                    <path d="M1186 795l48 36M1060 955l45-78M1060 955l38-42 62 42" fill="none" stroke-width="5"/>
                    <path d="M1133 290l72 8-17 497-76 112z" fill="url(#dark)"/>
                    <path d="M1124 286l9 4-21 617-7-3z" fill="#ccc"/>
                    <path d="M1258 808l-10 332-16 465-86 168 24-818z" fill="#6c6c6c"/>
                    <path d="M1248 806l10 2-88 148-8-2z" fill="#c4c4c4"/>
                    <path d="M1160 955h10l-24 818-6-4z" fill="#bdbdbd"/>
                    <path d="M1145 1450l-60 275 56 42z" fill="#858585"/>
                    <path d="M1136 1480l8-20-60 266-36 50-8-8 48-90z" fill="#777"/>
                    <path d="M1142 1630l-55 100 50 40z" fill="#999"/>
                    <path d="M1172 1720l-20 333-68 137 2-355z" fill="#6c6c6c"/>
                    <path d="M1078 1835l62-65 8 8-62 60-4 350-12 2z" fill="#bdbdbd"/>
                    <path d="M1040 1775l42-42 60 40" fill="none" stroke-width="8"/>
                    <path d="M1156 1993l121 19-89 196-118-18 14 0 68-137z" fill="#9f9f9f"/>
                    <path d="M1150 2054l98 14" fill="none"/>
                    <path d="M1070 2190l118 18v14l-118-16zM1188 2208l89-196-2 18-87 192z" fill="#6c6c6c"/>

                    <!-- left frame -->
                    <path d="M55 420L290 157l22 5v40l33 41-157 222-20 30 8 705 5 600-41 30-40 37-22-4-12-663z" fill="url(#side)"/>
                    <path d="M112 385L284 194v76L160 418z" fill="#545454"/>
                    <path d="M284 194l61 49-37 38-24-13z" fill="#8a8a8a"/>
                    <path d="M160 418l124-148 36 12-132 170z" fill="#a9a9a9"/>
                    <path d="M176 432l124-152" fill="none"/>
                    <path d="M64 424L296 164M74 424L304 168M84 424L298 190" fill="none"/>
                    <path d="M82 424l26-34 16 1450-20 26z" fill="#4f4f4f"/>
                    <path d="M64 424l22 1440M73 424l20 1440M110 388l24 1440M125 390l20 1438M125 392l62 74" fill="none"/>
                    <g fill="#ccc" stroke-width="3"><ellipse cx="98" cy="450" rx="4" ry="12"/><ellipse cx="103" cy="778" rx="4" ry="12"/><ellipse cx="109" cy="1145" rx="4" ry="12"/><ellipse cx="113" cy="1502" rx="4" ry="12"/><ellipse cx="118" cy="1800" rx="4" ry="12"/><ellipse cx="202" cy="330" rx="4" ry="10"/></g>

                    <!-- front housing -->
                    <path d="M275 368l138 14-3 92-24 22-198-22z" fill="#cacaca"/>
                    <path d="M407 380h12v90l-12 4z" fill="#bbb"/>
                    <path d="M386 497l26-27 4 85 308 242-21 28-317-242z" fill="#8d8d8d"/>
                    <path d="M703 825l20-26v82l-20-10z" fill="#858585"/>
                    <path d="M386 583l317 242" stroke-width="7"/>
                    <path d="M168 497l18-22 200 22v86l317 242-3 315-10 930-442-60-65-125-8-685z" fill="#dbe1ff"/>
                    <path d="M348 2168l62 84 296 48-30 57-404-62 38-60z" fill="#9f9f9f"/>
                    <path d="M310 2235l100 16" fill="none"/>
                    <path d="M248 2012l442 63 16 225-296-48z" fill="#b4bdd9"/>
                    <path d="M248 2011l442 63" stroke-width="9"/>
                    <path d="M272 2295l404 62v14l-404-60zM676 2357l30-57 2 15-32 56z" fill="#777"/>

                    <!-- top flange -->
                    <path d="M596 103l594 65-5 14-589-62z" fill="#777"/>
                    <path d="M592 105l4 18-164 194-7-2z" fill="#666"/>
                    <path d="M512 52l835 83-27 44-840-86z" fill="#a1a1a1"/>
                    <path d="M1347 135v16l-27 40v-12z" fill="#666"/>
                    <path d="M480 93l112 12-167 210-125-12z" fill="#a1a1a1"/>
                    <path d="M300 303l430 47-33 47-439-48z" fill="#a1a1a1"/>
                    <path d="M258 349l439 48v15l-439-48zM697 397l33-47v18l-33 44z" fill="#777"/>
                    <path d="M1190 168l130 12-72 107-121-19z" fill="#a1a1a1"/>
                    <path d="M1127 268l121 19v14l-123-13zM1248 287l72-107v12l-72 109z" fill="#777"/>
                    <g fill="#858585">
                        <ellipse cx="761" cy="97" rx="17" ry="8"/><ellipse cx="1060" cy="127" rx="17" ry="8"/><ellipse cx="486" cy="148" rx="17" ry="8"/>
                        <ellipse cx="397" cy="254" rx="17" ry="8"/><ellipse cx="554" cy="357" rx="17" ry="8"/><ellipse cx="1227" cy="224" rx="17" ry="8"/>
                        <ellipse cx="1166" cy="2129" rx="17" ry="9"/><ellipse cx="545" cy="2306" rx="17" ry="9"/>
                    </g>
                </g>

                <use href="#mount"/><use href="#rod"/><use href="#weights"/>
                <use href="#mount" x="5" y="856"/><use href="#rod" x="10" y="863"/><use href="#weights" x="30" y="865"/>

                <!-- axes -->
                <g class="axes">
                    <path d="M-1350 2364v-60" stroke="#1c7a2c" stroke-width="11"/><path d="M-1364 2310h28l-14-36z" fill="#1c7a2c"/>
                    <path d="M-1350 2364l-60-6" stroke="#1a1a9a" stroke-width="11"/><path d="M-1408 2344l-2 28-34-18z" fill="#1a1a9a"/>
                    <path d="M-1350 2364l-20 24" stroke="#8a1414" stroke-width="11"/><circle cx="-1372" cy="2390" r="14" fill="#b01818"/>
                    <text x="-1363" y="2278" fill="#1c7a2c">Y</text>
                    <text x="-1460" y="2362" fill="#1a1a9a">Z</text>
                    <text x="-1390" y="2418" fill="#c01818">X</text>
                </g>
            </svg>

            <div class="taskpane">
                <button aria-label="Ресурсы"><svg><use href="#home"/></svg></button>
                <button aria-label="Библиотека"><svg><use href="#books"/></svg></button>
                <button aria-label="Проводник"><svg><use href="#folder2"/></svg></button>
                <button aria-label="Палитра"><svg><use href="#palette"/></svg></button>
                <button class="active" aria-label="Внешние виды"><svg><use href="#ball2"/></svg></button>
                <button aria-label="Свойства"><svg><use href="#prop"/></svg></button>
                <button aria-label="Форум"><svg><use href="#chat"/></svg></button>
            </div>
            <button class="rotate" aria-label="Повернуть"><svg viewBox="0 0 30 30"><path d="M13 6a9.500 9.500 0 0 0 1 19M17 25a9.500 9.500 0 0 0-1-19" fill="none" stroke="#fff" stroke-width="2"/><path d="M11 3l5 3-4 4zM19 28l-5-3 4-4z" fill="#fff"/></svg></button>
        </section>
    </main>

    <div class="bottom-tabs">
        <div class="nav-box"></div>
        <div class="nav"><i>|◀</i><i>◀</i><i>▶</i><i>▶|</i></div>
        <button class="active">Модель</button>
        <button>Трехмерные виды</button>
        <button>Исследование движения 1</button>
    </div>

    <footer class="status">
        <span class="ver">SOLIDWORKS Premium 2018 SP4.0</span>
        <span class="cell">Недоопределенный</span>
        <span class="cell edit">Редактируется Сборка</span>
        <span class="units">ММГС</span><i class="up"></i>
        <svg viewBox="0 0 20 20"><path d="M3 4l10-2 5 5-3 9-9 1-4-6z" fill="#eee" stroke="#333"/><circle cx="10" cy="8" r="3" fill="none" stroke="#333"/></svg>
    </footer>

    <div class="watermark"><i>莫</i><i>四</i><i>网</i><b>www.3dmox.com</b></div>
</body>
</html>
```
FILE: styles.css
```css
* { box-sizing: border-box; }
body { margin: 0; height: 100vh; display: flex; flex-direction: column; overflow: hidden; background: #fff; color: #111; font-family: "Noto Sans", "Open Sans", sans-serif; font-size: 11px; line-height: 14px; }
button { margin: 0; padding: 0; border: none; background: none; font: inherit; color: inherit; }
a { color: inherit; text-decoration: none; }
i { font-style: normal; }
.sprite { position: absolute; width: 0; height: 0; }
.ico { width: 20px; height: 20px; flex: none; display: block; }
.ico svg { width: 20px; height: 20px; display: block; padding: 1px; }
.caret { flex: none; width: 6px; height: 4px; margin: 0 1px; border: solid transparent; border-width: 4px 3px 0; border-top-color: #333; }

/* title bar */
.titlebar { flex: none; height: 31px; display: flex; align-items: center; background: #f6f6f6; border-bottom: 1px solid #888; position: relative; }
.logo { width: 144px; height: 34px; margin: 0 0 -3px 10px; display: flex; align-items: center; background: linear-gradient(100deg, #fff 50%, #ddd); border: 1px solid #aaa; border-top: none; color: #c8323c; font-size: 16px; font-style: italic; flex: none; position: relative; }
.logo svg { width: 34px; height: 32px; margin-left: 4px; }
.menu { display: flex; align-items: center; width: 446px; height: 30px; padding-left: 29px; gap: 16px; border-right: 1px solid #999; flex: none; }
.pin { margin-left: 6px; }
.quick { display: flex; align-items: center; gap: 5px; padding-left: 16px; flex: none; }
.select-btn { display: flex; align-items: center; width: 39px; height: 26px; border: 1px solid #777; gap: 3px; }
.select-btn .ico { width: 26px; height: 24px; padding: 2px 3px; background: #b0b0b0; }
.doc-title { flex: 1; text-align: center; white-space: nowrap; }
.search { display: flex; align-items: center; width: 249px; height: 23px; border: 1px solid #222; background: #efeff4; padding: 0 4px; gap: 4px; flex: none; margin: 0; }
.search .prompt { width: 15px; height: 17px; background: #333; }
.search .prompt svg { display: block; width: 14px; height: 16px; }
.search input { flex: 1; min-width: 0; border: none; background: none; padding: 0 2px; font: inherit; }
.search input::placeholder { color: #666; opacity: 1; }
.search > svg { width: 18px; height: 18px; }
.win { display: flex; align-items: center; justify-content: space-between; width: 142px; padding: 0 0 0 7px; flex: none; color: #333; }
.help { font-weight: bold; font-size: 18px; line-height: 20px; }

/* ribbon */
.ribbon-row { flex: none; display: flex; height: 87px; background: #f6f6f6; }
.ribbon { flex: 1; display: grid; grid-template-columns: 94px 74px 80px 140px 110px 78px 84px 80px 66px 76px 88px 94px 124px 48px 68px 54px 56px; border-right: 1px solid #888; border-bottom: 1px solid #777; padding: 6px 0 2px; }
.cmd { display: flex; flex-direction: column; align-items: center; padding-top: 14px; line-height: 13px; white-space: nowrap; }
.cmd svg { width: 20px; height: 20px; flex: none; }
.cmd.drop { padding: 4px 0 8px; }
.cmd.drop span { margin-top: 2px; }
.cmd .caret { margin-top: auto; }
.cmd.low span { margin-top: 13px; }
.cmd.off { color: #b5b5b5; }
.cmd.off svg { opacity: .7; }
.cmd.on { background: #b0b0b0; border: 1px solid #777; margin: 0 1px; padding-top: 13px; }
.cmd.sep { border-right: 1px solid #ccc; }
.extra { width: 131px; height: 33px; display: flex; align-items: center; border-bottom: 1px solid #888; flex: none; gap: 10px; padding-left: 4px; }
.extra .ico:last-child { margin-left: -8px; }
.grip { width: 0; height: 28px; border-left: 2px dotted #888; }
.grip.second { height: 32px; border-right: 2px dotted #999; border-left: 1px solid #888; width: 5px; }

/* command tabs */
.tabs { flex: none; display: flex; height: 22px; }
.tab { background: #d2d2d2; border: 1px solid #888; border-top: none; border-left: none; padding: 0 10px; white-space: nowrap; }
.tab.active { background: #f6f6f6; padding: 0 8px; border-bottom: none; font-weight: 500; }

/* feature tree */
.work { flex: 1; min-height: 0; display: flex; }
.side { width: 310px; flex: none; display: flex; flex-direction: column; background: #f6f6f6; border-right: 1px solid #888; border-top: 1px solid #888; position: relative; }
.splitter { height: 18px; margin-top: 2px; border-top: 1px solid #aaa; border-bottom: 1px solid #bbb; display: flex; align-items: center; justify-content: center; flex: none; }
.splitter i, .side-handle i { width: 6px; height: 6px; border: 2px solid #bbb; border-radius: 50%; }
.side-tabs { display: flex; height: 27px; margin-top: 1px; padding-left: 2px; flex: none; }
.side-tabs button { width: 40px; background: #d2d2d2; border: 1px solid #888; border-left: none; display: flex; align-items: center; justify-content: center; }
.side-tabs button.active { background: #f6f6f6; border-bottom: none; border-top-color: #ccc; }
.side-tabs button svg { width: 18px; height: 18px; }
.side-tabs .more { width: 10px; height: 12px; margin: 7px 8px 0 auto; }
.filter { height: 26px; margin: 0 6px 0 5px; border: 1px solid #bbb; display: flex; align-items: center; gap: 1px; padding-left: 2px; flex: none; }
.filter svg { width: 18px; height: 18px; }
.filter .caret { margin-top: 8px; }
.tree-wrap { flex: 1; min-height: 0; display: flex; }
.tree { flex: 1; min-width: 0; overflow: hidden; list-style: none; margin: 0; padding: 2px 0 0; border-left: 1px solid #bbb; }
.tree li { display: flex; align-items: center; height: 22px; padding-left: 26px; white-space: nowrap; position: relative; gap: 5px; }
.tree li svg { width: 18px; height: 18px; flex: none; }
.tree li.root { padding-left: 4px; gap: 4px; }
.tree .l1 { padding-left: 49px; }
.tree .l2 { padding-left: 72px; }
.tree .l2 svg { color: #2a5f84; }
.tree .dim, .tree .dim svg { color: #aaa; }
.tree .closed::before, .tree .opened::before { content: ""; position: absolute; left: 8px; border: 4px solid transparent; }
.tree .closed::before { border-width: 4px 0 4px 5px; border-left-color: #666; }
.tree .opened::before { border-width: 5px 4px 0; border-top-color: #666; }
.tree .l1.closed::before, .tree .l1.opened::before { left: 31px; }
.vbar { width: 15px; margin-right: 2px; background: #eee; display: flex; flex-direction: column; flex: none; }
.vbar svg { width: 12px; height: 16px; margin-left: 2px; }
.vbar .thumb { height: 224px; background: #ccc; margin-bottom: auto; }
.hbar { width: 292px; height: 15px; background: #eee; display: flex; flex: none; margin-bottom: 5px; }
.hbar svg { width: 18px; height: 15px; }
.hbar .thumb { width: 76px; background: #ccc; margin-right: auto; }
.side-handle { position: absolute; right: -9px; top: 401px; width: 9px; height: 39px; background: #f6f6f6; border: 1px solid #888; border-left: none; display: flex; align-items: center; justify-content: center; }

/* graphics area */
.view { flex: 1; min-width: 0; position: relative; }
.model { display: block; width: 100%; height: 100%; }
.axes text { font: 30px "Liberation Serif", serif; }
.hud { position: absolute; top: -17px; left: 0; right: 2px; display: flex; align-items: center; justify-content: center; gap: 6px; }
.hud .caret { border-top-color: #999; }
.doc-win { position: absolute; top: -17px; right: 6px; display: flex; gap: 6px; color: #999; }
.taskpane { position: absolute; right: 0; top: 54px; width: 22px; border: 1px solid #999; border-right: none; background: #cfcfcf; }
.taskpane button { display: block; width: 100%; height: 24px; border-bottom: 1px solid #aaa; padding: 1px; }
.taskpane button.active { background: #fff; }
.taskpane svg { display: block; width: 20px; height: 20px; }
.rotate { position: absolute; right: 2px; bottom: 4px; width: 30px; height: 30px; border-radius: 4px; background: #585c5f; }
.rotate svg { display: block; width: 30px; height: 30px; }

/* bottom */
.bottom-tabs { flex: none; display: flex; height: 16px; border-top: 1px solid #777; border-bottom: 1px solid #777; background: #f6f6f6; }
.nav-box { width: 25px; margin-left: 2px; background: #fff; }
.nav { display: flex; width: 65px; background: #999; color: #777; }
.nav i { flex: 1; font-size: 8px; text-align: center; border-right: 1px solid #777; }
.bottom-tabs button { background: #d2d2d2; padding: 0 14px; border-right: 1px solid #888; white-space: nowrap; }
.bottom-tabs .active { background: #fff; font-weight: bold; padding: 0 10px 0 12px; }
.status { flex: none; display: flex; height: 14px; overflow: hidden; background: #f6f6f6; line-height: 20px; white-space: nowrap; }
.status .ver { margin-right: auto; padding-left: 1px; }
.status .cell { padding: 0 6px 0 4px; margin-right: 8px; border-right: 1px solid #ccc; }
.status .cell.edit { border-left: 1px solid #ccc; }
.status .units { margin-left: 8px; padding-left: 43px; border-left: 1px solid #ccc; }
.up { border: solid transparent; border-width: 0 4px 4px; border-bottom-color: #333; align-self: flex-start; margin: 7px 62px 0 27px; }
.status svg { width: 16px; height: 16px; margin: 2px 6px 0 0; }

.watermark { position: absolute; left: 7px; top: 4px; display: flex; gap: 9px; align-items: baseline; color: rgba(248, 248, 248, .9); text-shadow: 1px 1px 1px #666; white-space: nowrap; pointer-events: none; }
.watermark i { font: 100 64px/70px "Noto Sans CJK SC", sans-serif; }
.watermark b { font: 60px/70px "Liberation Mono", monospace; }
```
